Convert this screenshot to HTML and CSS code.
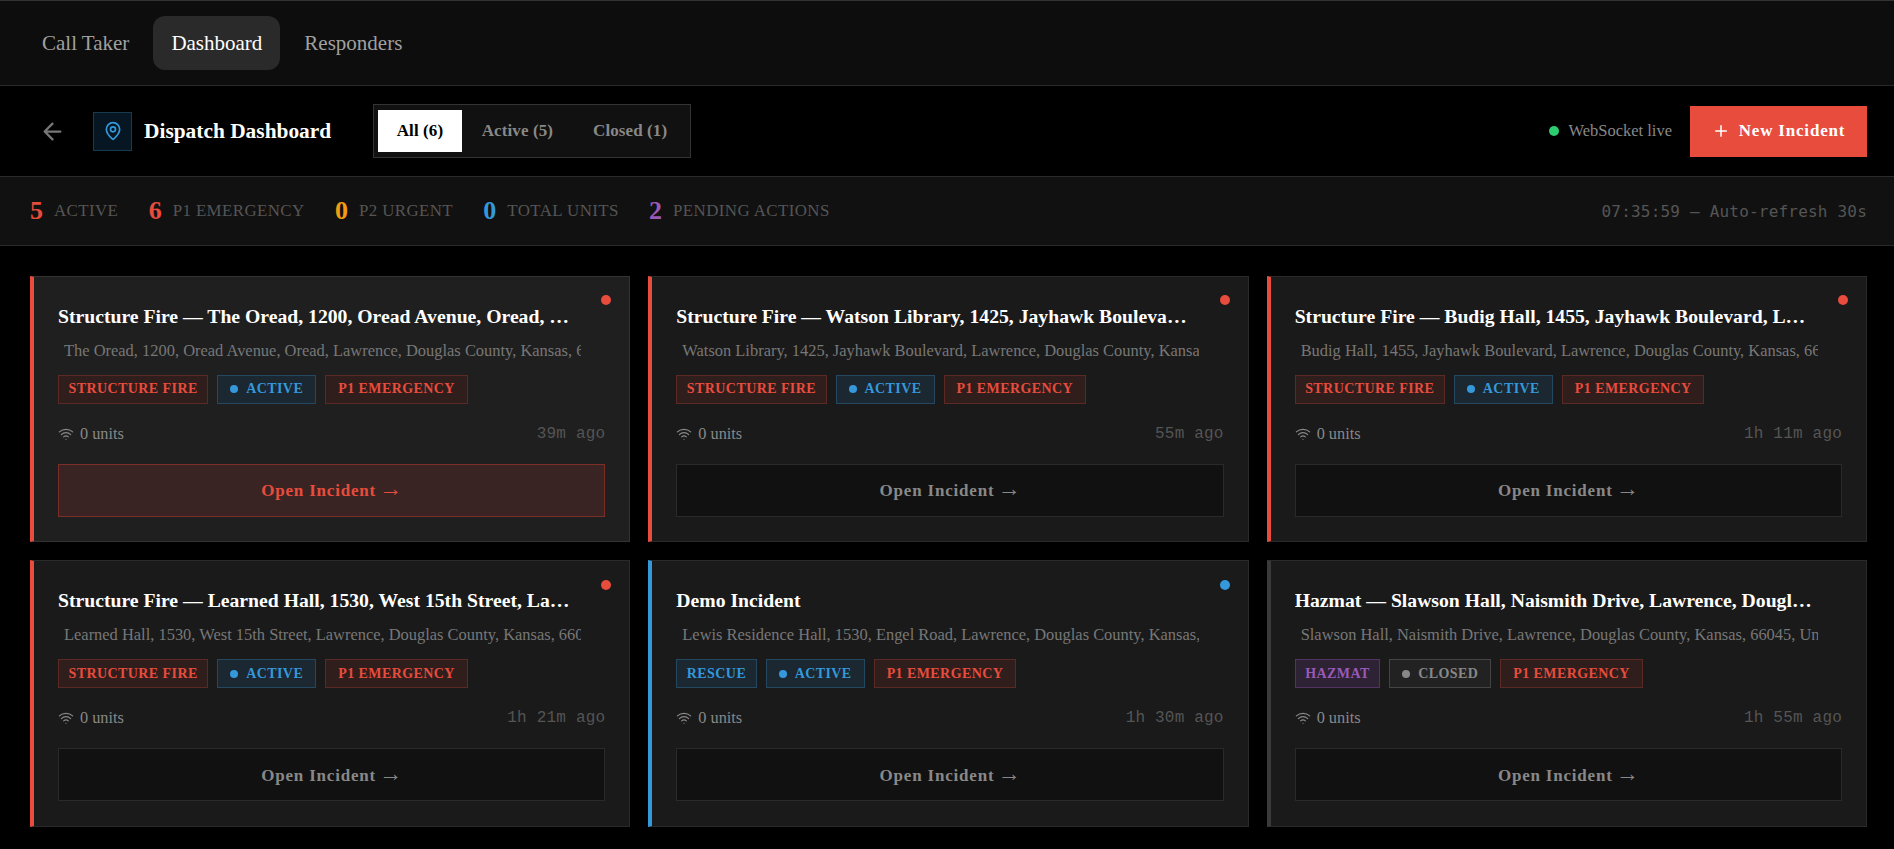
FILE: index.html
```html
<!DOCTYPE html>
<html lang="en">
<head>
<meta charset="utf-8">
<title>Dispatch Dashboard</title>
<link rel="stylesheet" href="styles.css">
</head>
<body>
<nav class="topnav">
  <a class="tab">Call Taker</a>
  <a class="tab tab-on">Dashboard</a>
  <a class="tab">Responders</a>
</nav>
<header class="subhead">
  <svg class="back" viewBox="0 0 24 24"><path d="M19 12H5M12 19l-7-7 7-7"/></svg>
  <span class="pinbox"><svg viewBox="0 0 24 24" width="20" height="20"><path d="M20 10c0 4.993-5.539 10.193-7.399 11.799a1 1 0 0 1-1.202 0C9.539 20.193 4 14.993 4 10a8 8 0 0 1 16 0"/><circle cx="12" cy="10" r="3"/></svg></span>
  <h1 class="pagetitle">Dispatch Dashboard</h1>
  <div class="filters">
    <button class="filter filter-on">All (6)</button>
    <button class="filter">Active (5)</button>
    <button class="filter">Closed (1)</button>
  </div>
  <div class="spacer"></div>
  <span class="livedot"></span>
  <span class="livetext">WebSocket live</span>
  <button class="newbtn"><svg viewBox="0 0 24 24" width="18" height="18"><path d="M5 12h14M12 5v14"/></svg>New Incident</button>
</header>
<section class="stats">
  <div class="stat"><b class="num red">5</b><span class="lbl">Active</span></div>
  <div class="stat"><b class="num red">6</b><span class="lbl">P1 Emergency</span></div>
  <div class="stat"><b class="num orange">0</b><span class="lbl">P2 Urgent</span></div>
  <div class="stat"><b class="num blue">0</b><span class="lbl">Total Units</span></div>
  <div class="stat"><b class="num purple">2</b><span class="lbl">Pending Actions</span></div>
  <div class="spacer"></div>
  <span class="clock">07:35:59 — Auto-refresh 30s</span>
</section>
<main class="grid">
  <article class="card card-hot edge-red">
    <span class="corner bg-red"></span>
    <h2 class="title">Structure Fire — The Oread, 1200, Oread Avenue, Oread, Lawrence, Douglas County</h2>
    <p class="addr">The Oread, 1200, Oread Avenue, Oread, Lawrence, Douglas County, Kansas, 66045, United States</p>
    <div class="tags"><span class="tag t-red">Structure Fire</span><span class="tag tag-wide t-blue"><i class="tagdot"></i>Active</span><span class="tag tag-wide t-red">P1 Emergency</span></div>
    <div class="meta"><span class="units"><svg viewBox="0 0 24 24" width="16" height="16"><path d="M12 20h.01M2 8.82a15 15 0 0 1 20 0M5 12.859a10 10 0 0 1 14 0M8.5 16.429a5 5 0 0 1 7 0"/></svg>0 units</span><span class="ago">39m ago</span></div>
    <button class="open open-hot">Open Incident <span class="arrow">→</span></button>
  </article>
  <article class="card edge-red">
    <span class="corner bg-red"></span>
    <h2 class="title">Structure Fire — Watson Library, 1425, Jayhawk Boulevard, Lawrence, Douglas County</h2>
    <p class="addr">Watson Library, 1425, Jayhawk Boulevard, Lawrence, Douglas County, Kansas, 66045, United States</p>
    <div class="tags"><span class="tag t-red">Structure Fire</span><span class="tag tag-wide t-blue"><i class="tagdot"></i>Active</span><span class="tag tag-wide t-red">P1 Emergency</span></div>
    <div class="meta"><span class="units"><svg viewBox="0 0 24 24" width="16" height="16"><path d="M12 20h.01M2 8.82a15 15 0 0 1 20 0M5 12.859a10 10 0 0 1 14 0M8.5 16.429a5 5 0 0 1 7 0"/></svg>0 units</span><span class="ago">55m ago</span></div>
    <button class="open">Open Incident <span class="arrow">→</span></button>
  </article>
  <article class="card edge-red">
    <span class="corner bg-red"></span>
    <h2 class="title">Structure Fire — Budig Hall, 1455, Jayhawk Boulevard, Lawrence, Douglas County</h2>
    <p class="addr">Budig Hall, 1455, Jayhawk Boulevard, Lawrence, Douglas County, Kansas, 66045, United States</p>
    <div class="tags"><span class="tag t-red">Structure Fire</span><span class="tag tag-wide t-blue"><i class="tagdot"></i>Active</span><span class="tag tag-wide t-red">P1 Emergency</span></div>
    <div class="meta"><span class="units"><svg viewBox="0 0 24 24" width="16" height="16"><path d="M12 20h.01M2 8.82a15 15 0 0 1 20 0M5 12.859a10 10 0 0 1 14 0M8.5 16.429a5 5 0 0 1 7 0"/></svg>0 units</span><span class="ago">1h 11m ago</span></div>
    <button class="open">Open Incident <span class="arrow">→</span></button>
  </article>
  <article class="card edge-red">
    <span class="corner bg-red"></span>
    <h2 class="title">Structure Fire — Learned Hall, 1530, West 15th Street, Lawrence, Douglas County</h2>
    <p class="addr">Learned Hall, 1530, West 15th Street, Lawrence, Douglas County, Kansas, 66045, United States</p>
    <div class="tags"><span class="tag t-red">Structure Fire</span><span class="tag tag-wide t-blue"><i class="tagdot"></i>Active</span><span class="tag tag-wide t-red">P1 Emergency</span></div>
    <div class="meta"><span class="units"><svg viewBox="0 0 24 24" width="16" height="16"><path d="M12 20h.01M2 8.82a15 15 0 0 1 20 0M5 12.859a10 10 0 0 1 14 0M8.5 16.429a5 5 0 0 1 7 0"/></svg>0 units</span><span class="ago">1h 21m ago</span></div>
    <button class="open">Open Incident <span class="arrow">→</span></button>
  </article>
  <article class="card edge-blue">
    <span class="corner bg-blue"></span>
    <h2 class="title">Demo Incident</h2>
    <p class="addr">Lewis Residence Hall, 1530, Engel Road, Lawrence, Douglas County, Kansas, 66045, United States</p>
    <div class="tags"><span class="tag t-blue">Rescue</span><span class="tag tag-wide t-blue"><i class="tagdot"></i>Active</span><span class="tag tag-wide t-red">P1 Emergency</span></div>
    <div class="meta"><span class="units"><svg viewBox="0 0 24 24" width="16" height="16"><path d="M12 20h.01M2 8.82a15 15 0 0 1 20 0M5 12.859a10 10 0 0 1 14 0M8.5 16.429a5 5 0 0 1 7 0"/></svg>0 units</span><span class="ago">1h 30m ago</span></div>
    <button class="open">Open Incident <span class="arrow">→</span></button>
  </article>
  <article class="card edge-grey">
    <h2 class="title">Hazmat — Slawson Hall, Naismith Drive, Lawrence, Douglas County, Kansas</h2>
    <p class="addr">Slawson Hall, Naismith Drive, Lawrence, Douglas County, Kansas, 66045, United States</p>
    <div class="tags"><span class="tag t-purple">Hazmat</span><span class="tag tag-wide t-grey"><i class="tagdot"></i>Closed</span><span class="tag tag-wide t-red">P1 Emergency</span></div>
    <div class="meta"><span class="units"><svg viewBox="0 0 24 24" width="16" height="16"><path d="M12 20h.01M2 8.82a15 15 0 0 1 20 0M5 12.859a10 10 0 0 1 14 0M8.5 16.429a5 5 0 0 1 7 0"/></svg>0 units</span><span class="ago">1h 55m ago</span></div>
    <button class="open">Open Incident <span class="arrow">→</span></button>
  </article>
</main>
</body>
</html>
```
FILE: styles.css
```css
* { box-sizing: border-box; }
html, body { margin: 0; padding: 0; }
body { background: #000; color: #fff; font-family: "Liberation Serif", serif; height: 849px; overflow: hidden; }
svg { fill: none; stroke: currentColor; stroke-width: 2; stroke-linecap: round; stroke-linejoin: round; flex: none; }
button { font-family: inherit; cursor: pointer; }

.topnav { height: 86px; background: #0d0d0d; border-top: 1px solid #333; border-bottom: 1px solid #2a2a2a; display: flex; align-items: center; gap: 6px; padding: 0 24px 1px; }
.tab { font-size: 21px; color: #a0a0a0; padding: 0 18px; height: 54px; line-height: 54px; border-radius: 12px; }
.tab-on { background: #2a2a2a; color: #fff; }

.subhead { height: 91px; background: #000; border-bottom: 1px solid #2a2a2a; display: flex; align-items: center; padding: 0 27px 0 39px; }
.back { color: #777; width: 27px; height: 27px; }
.pinbox { width: 39px; height: 39px; margin-left: 27px; background: #061622; border: 1px solid #1a3a50; color: #3498db; display: flex; align-items: center; justify-content: center; }
.pagetitle { font-size: 21.4px; font-weight: 700; margin: 0 0 0 12px; }
.filters { display: flex; margin-left: 42px; padding: 5px 3px 5px 4px; height: 54px; border: 1px solid #333; background: #111; }
.filter { border: 0; background: transparent; color: #888; font-size: 17px; font-weight: 700; letter-spacing: .1px; padding: 0 20px; height: 42px; }
.filter-on { background: #fff; color: #000; padding: 0 18.5px; }
.spacer { flex: 1; }
.livedot { width: 10px; height: 10px; border-radius: 50%; background: #2ecc71; }
.livetext { font-size: 16.5px; color: #888; margin-left: 9px; }
.newbtn { margin-left: 18px; height: 51px; width: 177px; border: 0; background: #e74c3c; color: #fff; font-size: 17px; font-weight: 700; letter-spacing: .8px; display: flex; align-items: center; justify-content: center; gap: 9px; }

.stats { height: 69px; background: #111; border-bottom: 1px solid #2a2a2a; display: flex; align-items: center; gap: 30.3px; padding: 0 27px 0 30px; }
.stat { display: flex; align-items: center; gap: 11px; }
.num { font-size: 26px; }
.lbl { font-size: 16.9px; color: #555; text-transform: uppercase; letter-spacing: .4px; }
.red { color: #e74c3c; }
.orange { color: #f39c12; }
.blue { color: #3498db; }
.purple { color: #9b59b6; }
.clock { font-family: "DejaVu Sans Mono", monospace; font-size: 16px; letter-spacing: .2px; color: #555; }

.grid { display: grid; grid-template-columns: repeat(3, 1fr); gap: 18px; padding: 29.9px 27px 0 30px; }
.card { position: relative; height: 266.5px; background: #1a1a1a; border: 1px solid #2a2a2a; border-left-width: 4px; padding: 24px 24px 24px; }
.card-hot { background: #1f1f1f; border-color: #333; }
.edge-red { border-left-color: #e74c3c; }
.edge-blue { border-left-color: #3498db; }
.edge-grey { border-left-color: #3a3a3a; }
.corner { position: absolute; top: 18.5px; right: 18px; width: 10px; height: 10px; border-radius: 50%; }
.bg-red { background: #e74c3c; }
.bg-blue { background: #3498db; }
.title { font-size: 19.7px; font-weight: 700; line-height: 30px; margin: 0; width: 518px; white-space: nowrap; overflow: hidden; text-overflow: ellipsis; }
.addr { font-size: 16.45px; color: #777; line-height: 20px; margin: 10px 0 0; width: 523px; padding-left: 6px; white-space: nowrap; overflow: hidden; }
.tags { display: flex; gap: 9px; margin-top: 14px; }
.tag { height: 29px; display: flex; align-items: center; padding: 0 9.5px; border: 1px solid; font-size: 14px; font-weight: 700; letter-spacing: .42px; text-transform: uppercase; }
.tag-wide { padding: 0 12px; }
.tagdot { width: 8px; height: 8px; border-radius: 50%; background: currentColor; margin-right: 8px; }
.t-red { color: #e74c3c; background: #301e1c; border-color: #5c2a25; }
.t-blue { color: #3498db; background: #1b2731; border-color: #24485f; }
.t-purple { color: #9b59b6; background: #2e2235; border-color: #523364; }
.t-grey { color: #888; background: #222; border-color: #444; }
.meta { display: flex; align-items: center; justify-content: space-between; margin-top: 19px; height: 22px; }
.units { display: flex; align-items: center; gap: 6px; font-size: 16.3px; color: #888; }
.units svg { stroke-width: 1.75; }
.ago { font-family: "Liberation Mono", monospace; font-size: 16px; letter-spacing: .2px; color: #555; }
.open { display: block; width: 100%; height: 53px; margin-top: 19px; padding: 2px 0 0; background: #111; border: 1px solid #2a2a2a; color: #888; font-size: 17px; font-weight: 700; letter-spacing: .8px; }
.arrow { font-size: 23px; font-weight: 400; line-height: 0; letter-spacing: 0; margin-left: -2px; }
.open-hot { background: #3a2423; border-color: #7a2e27; color: #e74c3c; }
```
